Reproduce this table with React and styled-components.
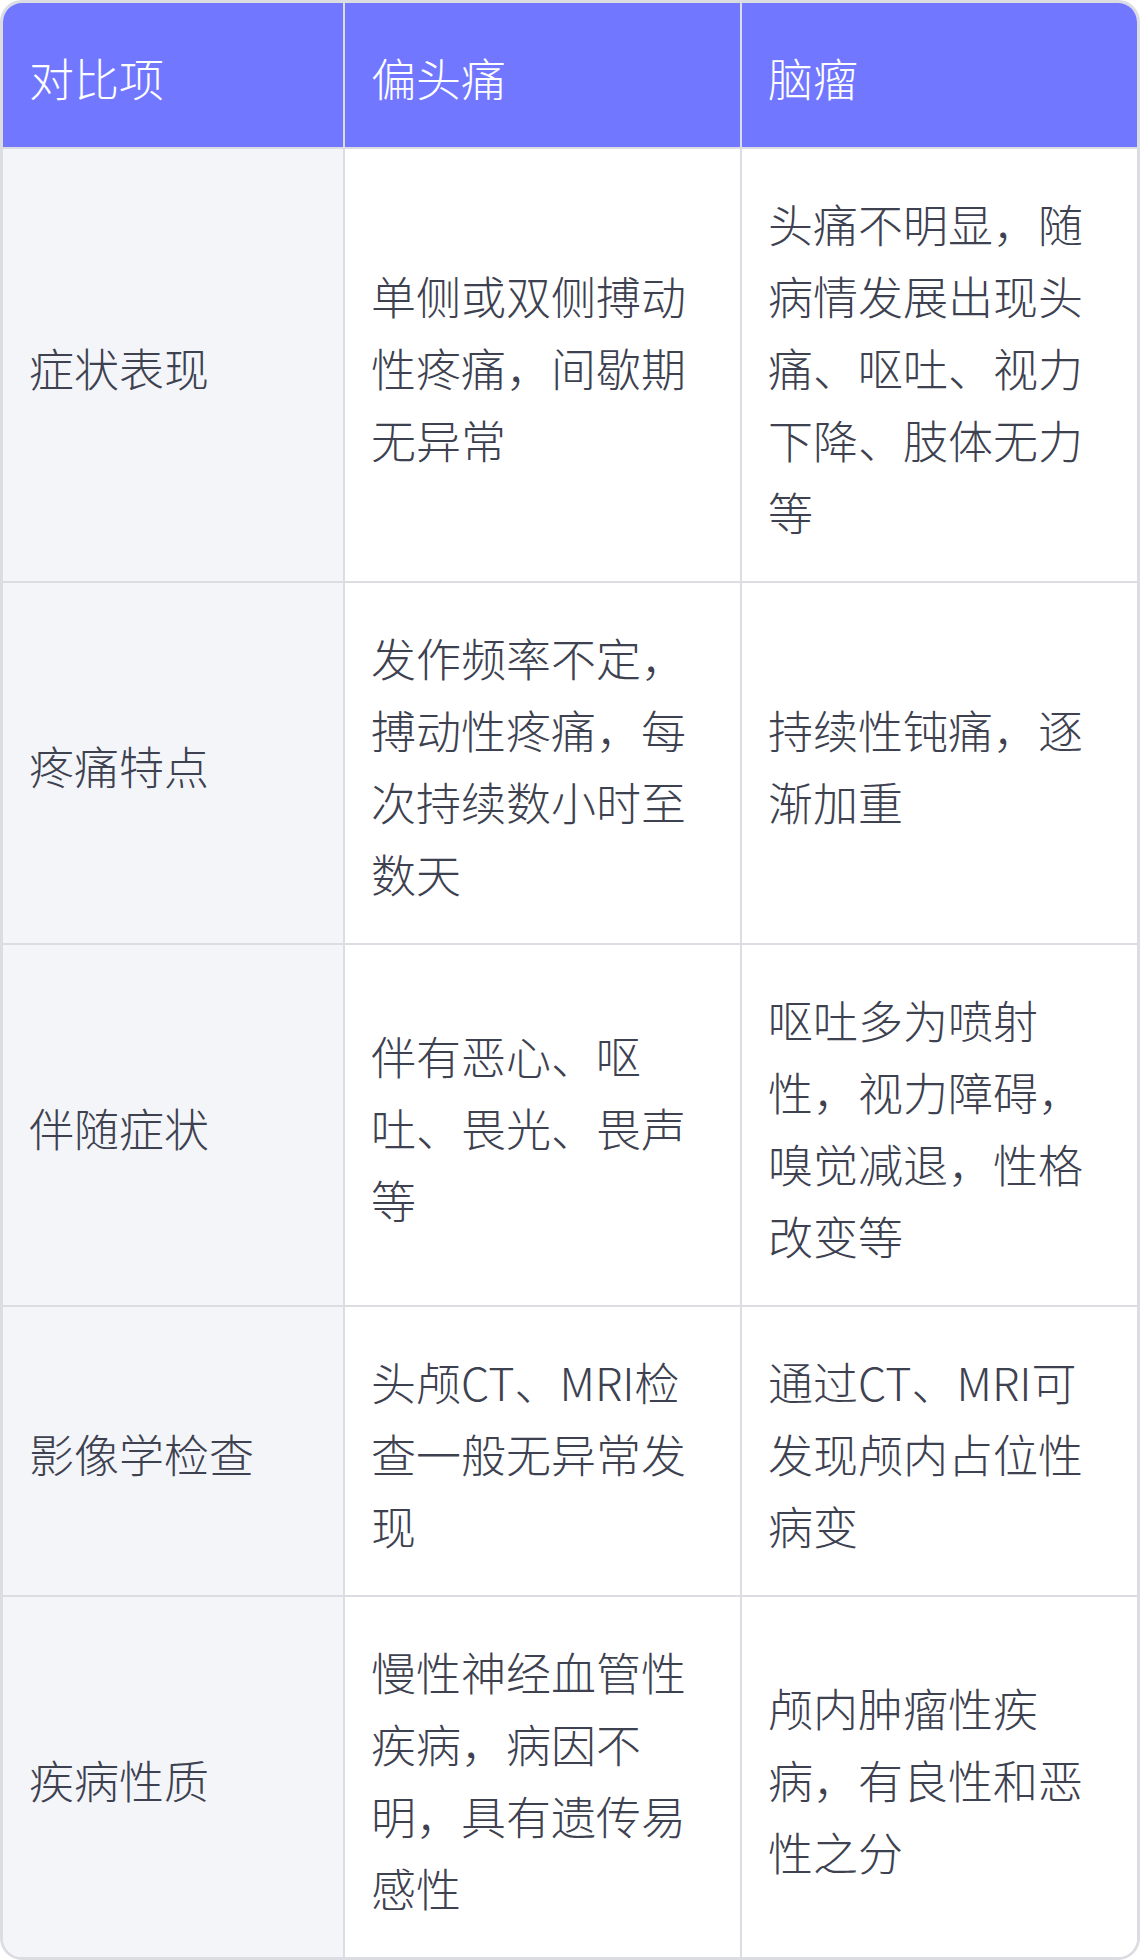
import React from "react";
import styled, { createGlobalStyle } from "styled-components";

const columns = ["对比项", "偏头痛", "脑瘤"];

const rows = [
  {
    item: "症状表现",
    migraine: "单侧或双侧搏动性疼痛，间歇期无异常",
    tumor: "头痛不明显，随病情发展出现头痛、呕吐、视力下降、肢体无力等",
  },
  {
    item: "疼痛特点",
    migraine: "发作频率不定，搏动性疼痛，每次持续数小时至数天",
    tumor: "持续性钝痛，逐渐加重",
  },
  {
    item: "伴随症状",
    migraine: "伴有恶心、呕吐、畏光、畏声等",
    tumor: "呕吐多为喷射性，视力障碍，嗅觉减退，性格改变等",
  },
  {
    item: "影像学检查",
    migraine: "头颅CT、MRI检查一般无异常发现",
    tumor: "通过CT、MRI可发现颅内占位性病变",
  },
  {
    item: "疾病性质",
    migraine: "慢性神经血管性疾病，病因不明，具有遗传易感性",
    tumor: "颅内肿瘤性疾病，有良性和恶性之分",
  },
];

const GlobalStyle = createGlobalStyle`
  html, body {
    margin: 0;
    padding: 0;
    background: #ffffff;
  }
  body {
    font-family: "Noto Sans CJK SC", "Noto Sans", sans-serif;
  }
`;

const Table = styled.table`
  width: 100%;
  table-layout: fixed;
  border-collapse: separate;
  border-spacing: 0;
  border: 3px solid #dcdde2;
  border-radius: 22px;
  overflow: hidden;
  box-sizing: border-box;
`;

const Col = styled.col`
  width: ${({ $w }) => $w};
`;

const HeadCell = styled.th`
  background: #7177ff;
  color: #ffffff;
  font-weight: 300;
  font-size: 45px;
  line-height: 72px;
  text-align: left;
  padding: 39px 26px 33px;
  border-right: ${({ $last }) => ($last ? "none" : "2px solid #dcdde2")};
  border-bottom: 2px solid #dcdde2;
`;

const Cell = styled.td`
  background: ${({ $label }) => ($label ? "#f4f5f9" : "#ffffff")};
  color: #3d4150;
  font-weight: 300;
  font-size: 45px;
  line-height: 72px;
  vertical-align: middle;
  padding: 39px 26px 33px;
  word-break: break-all;
  border-right: ${({ $last }) => ($last ? "none" : "2px solid #dcdde2")};
  border-bottom: ${({ $bottom }) => ($bottom ? "none" : "2px solid #dcdde2")};
`;

export default function App() {
  return (
    <>
      <GlobalStyle />
      <Table>
        <colgroup>
          <Col $w="342px" />
          <Col $w="397px" />
          <Col $w="auto" />
        </colgroup>
        <thead>
          <tr>
            {columns.map((c, i) => (
              <HeadCell key={c} $last={i === columns.length - 1}>
                {c}
              </HeadCell>
            ))}
          </tr>
        </thead>
        <tbody>
          {rows.map((r, i) => {
            const bottom = i === rows.length - 1;
            return (
              <tr key={r.item}>
                <Cell $label $bottom={bottom}>{r.item}</Cell>
                <Cell $bottom={bottom}>{r.migraine}</Cell>
                <Cell $last $bottom={bottom}>{r.tumor}</Cell>
              </tr>
            );
          })}
        </tbody>
      </Table>
    </>
  );
}
